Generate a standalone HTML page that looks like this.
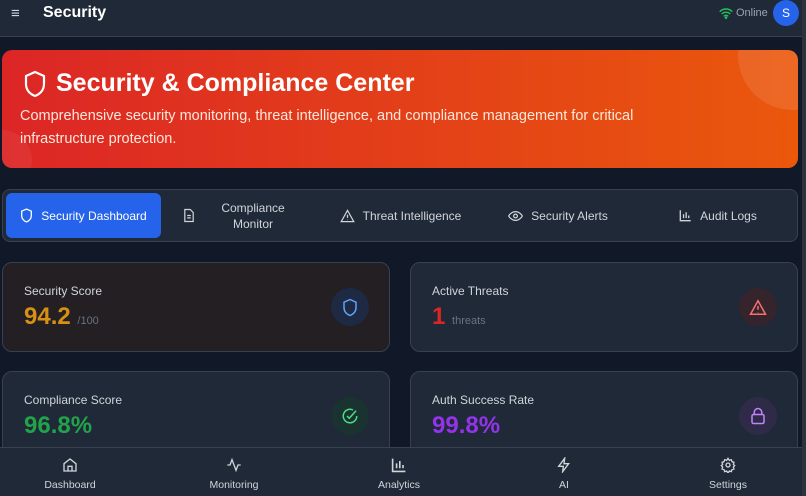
<!DOCTYPE html>
<html><head><style>
*{box-sizing:border-box;margin:0;padding:0}
body{width:806px;height:496px;overflow:hidden;background:#111827;font-family:"Liberation Sans",sans-serif;color:#e5e7eb;position:relative}
.hdr{position:absolute;left:0;top:0;width:802px;height:37px;background:#1f2937;border-bottom:1px solid #374151}
.sb{position:absolute;right:0;top:0;width:4px;height:496px;background:#2b3340}
.banner{position:absolute;left:2px;top:50px;width:796px;height:118px;border-radius:10px;background:linear-gradient(90deg,#dc2626,#ea580c);overflow:hidden}
.tabs{position:absolute;left:2px;top:189px;width:796px;height:53px;border-radius:8px;background:#1f2937;border:1px solid #374151}
.tab{position:absolute;top:3px;height:45px;display:flex;align-items:center;justify-content:center;font-size:12px;color:#d1d5db;gap:8px}
.card{position:absolute;width:388px;height:90px;border-radius:10px;background:#1f2937;border:1px solid #374151}
.lbl{position:absolute;left:21px;top:21px;font-size:12px;color:#d1d5db}
.val{position:absolute;left:21px;top:40px;font-size:24px;font-weight:bold}
.ic{position:absolute;right:20px;top:25px;width:38px;height:38px;border-radius:50%;display:flex;align-items:center;justify-content:center}
.nav{position:absolute;left:0;top:447px;width:802px;height:49px;background:#1f2937;border-top:1px solid #374151}
.ni{position:absolute;top:9px;width:100px;text-align:center;font-size:10.5px;color:#d1d5db}
.ni svg{display:block;margin:0 auto 6px}
</style></head><body>
<div class="hdr">
<div style="position:absolute;left:11px;top:5px;font-size:15px;color:#d1d5db">≡</div>
<div style="position:absolute;left:43px;top:4px;font-size:16px;font-weight:bold;color:#fff">Security</div>
<svg style="position:absolute;left:719px;top:7px" width="14" height="12" viewBox="0 0 24 20" fill="none" stroke="#22c55e" stroke-width="2.5" stroke-linecap="round"><path d="M2 7a15 15 0 0 1 20 0M5.5 11a10 10 0 0 1 13 0M9 15a5 5 0 0 1 6 0"/><circle cx="12" cy="18" r="1" fill="#22c55e"/></svg>
<div style="position:absolute;left:736px;top:7px;font-size:11px;color:#9ca3af">Online</div>
<div style="position:absolute;left:773px;top:0;width:26px;height:26px;border-radius:50%;background:#2563eb;color:#fff;font-size:12px;text-align:center;line-height:26px">S</div>
</div>
<div class="sb"></div>
<div class="banner">
<div style="position:absolute;right:-50px;top:-50px;width:110px;height:110px;border-radius:50%;background:rgba(255,255,255,0.1)"></div>
<div style="position:absolute;left:-30px;top:80px;width:60px;height:60px;border-radius:50%;background:rgba(255,255,255,0.06)"></div>
<svg style="position:absolute;left:21px;top:20px" width="24" height="28" viewBox="0 0 24 28" fill="none" stroke="#fff" stroke-width="2.2" stroke-linejoin="round"><path d="M12 2l9 4v8c0 6-4 10-9 12C7 24 3 20 3 14V6z"/></svg>
<div style="position:absolute;left:54px;top:19px;font-size:25px;font-weight:bold;color:#fff">Security &amp; Compliance Center</div>
<div style="position:absolute;left:18px;top:55px;width:700px;font-size:14.5px;line-height:23px;color:#fde8dc">Comprehensive security monitoring, threat intelligence, and compliance management for critical infrastructure protection.</div>
</div>
<div class="tabs">
<div class="tab" style="left:3px;width:155px;background:#2563eb;border-radius:6px;color:#fff"><svg width="13" height="15" viewBox="0 0 24 28" fill="none" stroke="#fff" stroke-width="2.4"><path d="M12 2l9 4v8c0 6-4 10-9 12C7 24 3 20 3 14V6z"/></svg>Security Dashboard</div>
<div class="tab" style="left:170px;width:140px"><svg width="12" height="15" viewBox="0 0 20 24" fill="none" stroke="#d1d5db" stroke-width="2"><path d="M3 2h9l5 5v15H3z M7 12h6M7 16h6"/></svg><span style="text-align:center;line-height:16px;width:100px">Compliance<br>Monitor</span></div>
<div class="tab" style="left:325px;width:145px"><svg width="15" height="14" viewBox="0 0 24 22" fill="none" stroke="#d1d5db" stroke-width="2"><path d="M12 2L22 20H2z M12 9v5M12 17v.5"/></svg>Threat Intelligence</div>
<div class="tab" style="left:495px;width:120px"><svg width="15" height="12" viewBox="0 0 24 18" fill="none" stroke="#d1d5db" stroke-width="2"><path d="M1 9s4-7 11-7 11 7 11 7-4 7-11 7S1 9 1 9z"/><circle cx="12" cy="9" r="3"/></svg>Security Alerts</div>
<div class="tab" style="left:660px;width:110px"><svg width="13" height="13" viewBox="0 0 20 20" fill="none" stroke="#d1d5db" stroke-width="2"><path d="M2 2v16h16M7 14V8M11 14V5M15 14v-4"/></svg>Audit Logs</div>
</div>
<div class="card" style="left:2px;top:262px;background:#231f22"><div class="lbl">Security Score</div><div class="val" style="color:#d69014">94.2 <span style="font-size:11px;font-weight:normal;color:#6b7280">/100</span></div><div class="ic" style="background:#1e2a44"><svg width="16" height="19" viewBox="0 0 24 28" fill="none" stroke="#60a5fa" stroke-width="2.2"><path d="M12 2l9 4v8c0 6-4 10-9 12C7 24 3 20 3 14V6z"/></svg></div></div>
<div class="card" style="left:410px;top:262px"><div class="lbl">Active Threats</div><div class="val" style="color:#dc2626">1 <span style="font-size:11px;font-weight:normal;color:#6b7280">threats</span></div><div class="ic" style="background:#35242c"><svg width="18" height="17" viewBox="0 0 24 22" fill="none" stroke="#f87171" stroke-width="2"><path d="M12 2L22 20H2z M12 9v5M12 17v.5"/></svg></div></div>
<div class="card" style="left:2px;top:371px"><div class="lbl">Compliance Score</div><div class="val" style="color:#22a34a">96.8%</div><div class="ic" style="background:#1b3330"><svg width="18" height="18" viewBox="0 0 24 24" fill="none" stroke="#4ade80" stroke-width="2"><path d="M21 12a9 9 0 1 1-5-8M8 12l3 3 9-10"/></svg></div></div>
<div class="card" style="left:410px;top:371px"><div class="lbl">Auth Success Rate</div><div class="val" style="color:#9333ea">99.8%</div><div class="ic" style="background:#2e2a48"><svg width="16" height="18" viewBox="0 0 20 24" fill="none" stroke="#c084fc" stroke-width="2"><rect x="2" y="10" width="16" height="12" rx="2"/><path d="M5 10V7a5 5 0 0 1 10 0v3"/></svg></div></div>
<div class="nav">
<div class="ni" style="left:20px"><svg width="16" height="16" viewBox="0 0 24 24" fill="none" stroke="#d1d5db" stroke-width="2"><path d="M3 10l9-7 9 7v11H3z M9 21v-7h6v7"/></svg>Dashboard</div>
<div class="ni" style="left:184px"><svg width="16" height="16" viewBox="0 0 24 24" fill="none" stroke="#d1d5db" stroke-width="2"><path d="M2 12h4l3-8 6 16 3-8h4"/></svg>Monitoring</div>
<div class="ni" style="left:349px"><svg width="16" height="16" viewBox="0 0 20 20" fill="none" stroke="#d1d5db" stroke-width="2"><path d="M2 2v16h16M7 14V8M11 14V5M15 14v-4"/></svg>Analytics</div>
<div class="ni" style="left:514px"><svg width="16" height="16" viewBox="0 0 24 24" fill="none" stroke="#d1d5db" stroke-width="2"><path d="M13 2L4 14h7l-1 8 9-12h-7z"/></svg>AI</div>
<div class="ni" style="left:678px"><svg width="16" height="16" viewBox="0 0 24 24" fill="none" stroke="#d1d5db" stroke-width="2"><circle cx="12" cy="12" r="3"/><path d="M12 2l2 3 3-1 1 3 3 1-1 3 2 2-2 2 1 3-3 1-1 3-3-1-2 3-2-3-3 1-1-3-3-1 1-3-2-2 2-2-1-3 3-1 1-3 3 1z"/></svg>Settings</div>
</div>
</body></html>
